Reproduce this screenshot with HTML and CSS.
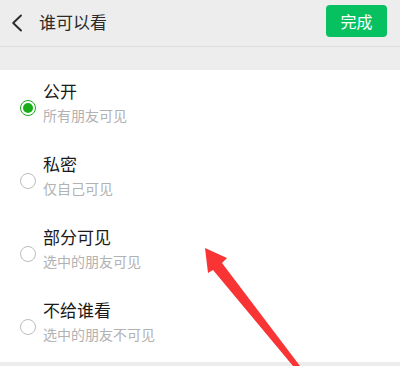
FILE: index.html
```html
<!DOCTYPE html>
<html lang="zh-CN">
<head>
<meta charset="utf-8">
<title>谁可以看</title>
<link rel="stylesheet" href="styles.css">
</head>
<body>
<div class="page">
  <header class="nav">
    <svg class="back" width="12" height="18" viewBox="0 0 12 18"><path d="M10 1.5 L2.2 9 L10 16.5" fill="none" stroke="#2b2b2b" stroke-width="1.9" stroke-linecap="round" stroke-linejoin="round"/></svg>
    <div class="nav-title">谁可以看</div>
    <button class="done">完成</button>
  </header>
  <div class="gap"></div>
  <ul class="list">
    <li class="item">
      <span class="radio checked"></span>
      <div class="text"><div class="title">公开</div><div class="sub">所有朋友可见</div></div>
    </li>
    <li class="item">
      <span class="radio"></span>
      <div class="text"><div class="title">私密</div><div class="sub">仅自己可见</div></div>
    </li>
    <li class="item">
      <span class="radio"></span>
      <div class="text"><div class="title">部分可见</div><div class="sub">选中的朋友可见</div></div>
    </li>
    <li class="item">
      <span class="radio"></span>
      <div class="text"><div class="title">不给谁看</div><div class="sub">选中的朋友不可见</div></div>
    </li>
  </ul>
  <svg class="arrow" width="400" height="366" viewBox="0 0 400 366">
    <polygon points="205,248 227,258 222,263 300,366 293,366 213,270 208,273" fill="#f83434"/>
  </svg>
</div>
</body>
</html>
```

FILE: styles.css
```css
* { box-sizing: border-box; }
html, body {
  margin: 0;
  padding: 0;
  background: #ededed;
}
body {
  font-family: "Noto Sans CJK SC", "Noto Sans", sans-serif;
  width: 400px;
  height: 366px;
  overflow: hidden;
}
.page {
  position: relative;
  width: 400px;
  height: 366px;
}
.nav {
  display: flex;
  align-items: center;
  height: 47px;
  padding: 0 13px 0 11px;
  background: #ededed;
  border-bottom: 1px solid #dcdcdc;
}
.back {
  display: block;
}
.nav-title {
  margin-left: 16px;
  font-size: 17px;
  line-height: 22px;
  color: #2b2b2b;
  margin-bottom: 2px;
  flex: 1;
}
.done {
  width: 61px;
  height: 32px;
  margin-bottom: 4px;
  border: none;
  border-radius: 4px;
  background: #07c160;
  color: #fff;
  font-family: inherit;
  font-size: 16px;
  padding: 0;
}
.gap {
  height: 23px;
}
.list {
  list-style: none;
  margin: 0;
  padding: 0;
  background: #fff;
}
.item {
  display: grid;
  grid-template-columns: 16px 1fr;
  column-gap: 7px;
  height: 73px;
  padding: 10px 0 0 20px;
}
.radio {
  width: 16px;
  height: 16px;
  margin-top: 20px;
  border: 1.5px solid #bdbdbd;
  border-radius: 50%;
  position: relative;
}
.radio.checked {
  border-color: #1aad19;
}
.radio.checked::after {
  content: "";
  position: absolute;
  left: 1.5px;
  top: 1.5px;
  width: 10px;
  height: 10px;
  border-radius: 50%;
  background: #1aad19;
}
.title {
  font-size: 17px;
  line-height: 22px;
  color: #1a1a1a;
}
.sub {
  margin-top: 4px;
  font-size: 14px;
  line-height: 18px;
  color: #b2b2b2;
}
.arrow {
  position: absolute;
  left: 0;
  top: 0;
}
```
